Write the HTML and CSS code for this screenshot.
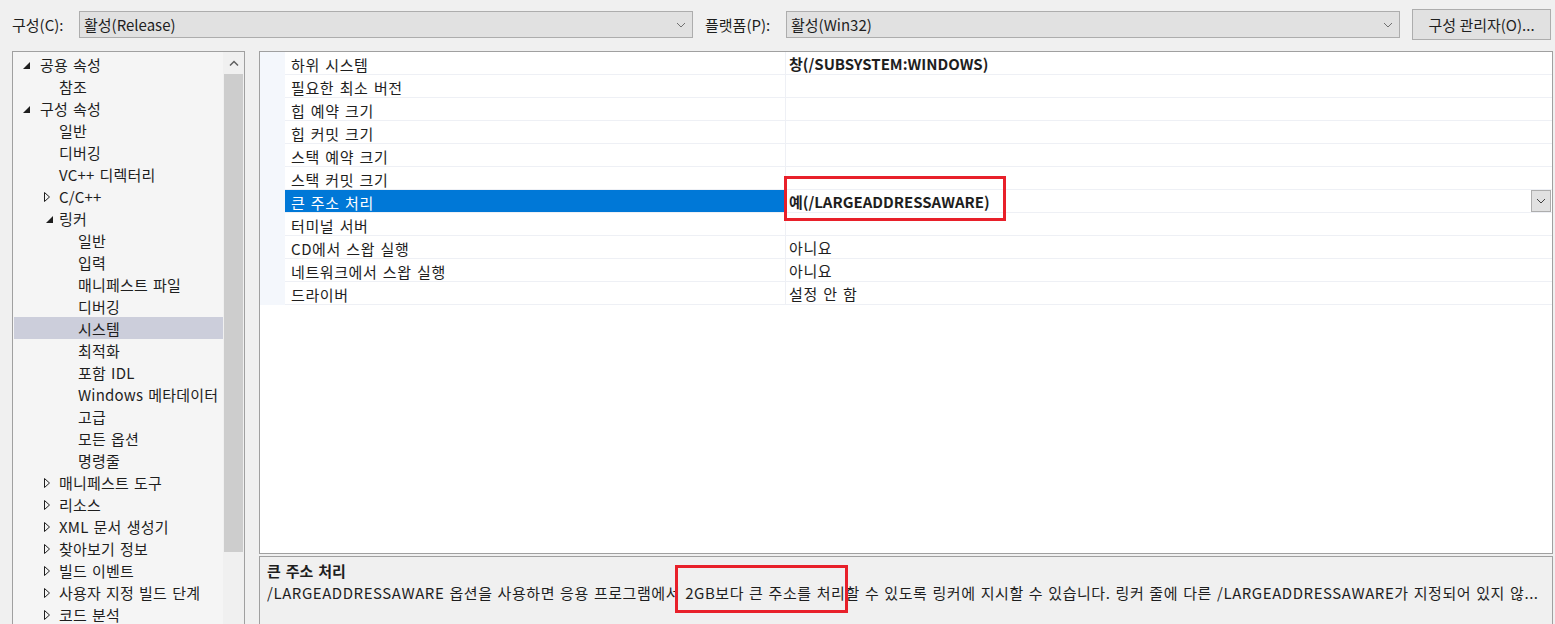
FILE: index.html
```html
<!DOCTYPE html>
<html>
<head>
    <title>속성 페이지</title>
    <meta charset="UTF-8">
    <link rel="stylesheet" href="styles.css">
</head>
<body>
    <div class="toolbar">
        <span class="bar-label">구성(C):</span>
        <div class="combo">
            <span>활성(Release)</span>
            <svg class="chevron" width="10" height="6" viewBox="0 0 10 6"><path d="M1 1 L5 5 L9 1" fill="none" stroke="#707070" stroke-width="1"/></svg>
        </div>
        <span class="bar-label label-platform">플랫폼(P):</span>
        <div class="combo">
            <span>활성(Win32)</span>
            <svg class="chevron" width="10" height="6" viewBox="0 0 10 6"><path d="M1 1 L5 5 L9 1" fill="none" stroke="#707070" stroke-width="1"/></svg>
        </div>
        <button class="manager-button">구성 관리자(O)...</button>
    </div>

    <div class="main">
        <div class="tree">
            <div class="tree-list">
                <div class="tree-row lvl-0"><span class="exp"><svg width="7" height="7" viewBox="0 0 7 7"><path d="M7 0 L7 7 L0 7 Z" fill="#1e1e1e"/></svg></span>공용 속성</div>
                <div class="tree-row lvl-1"><span class="exp"></span>참조</div>
                <div class="tree-row lvl-0"><span class="exp"><svg width="7" height="7" viewBox="0 0 7 7"><path d="M7 0 L7 7 L0 7 Z" fill="#1e1e1e"/></svg></span>구성 속성</div>
                <div class="tree-row lvl-1"><span class="exp"></span>일반</div>
                <div class="tree-row lvl-1"><span class="exp"></span>디버깅</div>
                <div class="tree-row lvl-1"><span class="exp"></span>VC++ 디렉터리</div>
                <div class="tree-row lvl-1"><span class="exp closed"><svg width="6" height="10" viewBox="0 0 6 10"><path d="M0.5 0.5 L5.5 5 L0.5 9.5 Z" fill="none" stroke="#1e1e1e" stroke-width="1"/></svg></span>C/C++</div>
                <div class="tree-row lvl-1"><span class="exp open-sub"><svg width="7" height="7" viewBox="0 0 7 7"><path d="M7 0 L7 7 L0 7 Z" fill="#1e1e1e"/></svg></span>링커</div>
                <div class="tree-row lvl-2"><span class="exp"></span>일반</div>
                <div class="tree-row lvl-2"><span class="exp"></span>입력</div>
                <div class="tree-row lvl-2"><span class="exp"></span>매니페스트 파일</div>
                <div class="tree-row lvl-2"><span class="exp"></span>디버깅</div>
                <div class="tree-row lvl-2 selected"><span class="exp"></span>시스템</div>
                <div class="tree-row lvl-2"><span class="exp"></span>최적화</div>
                <div class="tree-row lvl-2"><span class="exp"></span>포함 IDL</div>
                <div class="tree-row lvl-2"><span class="exp"></span>Windows 메타데이터</div>
                <div class="tree-row lvl-2"><span class="exp"></span>고급</div>
                <div class="tree-row lvl-2"><span class="exp"></span>모든 옵션</div>
                <div class="tree-row lvl-2"><span class="exp"></span>명령줄</div>
                <div class="tree-row lvl-1"><span class="exp closed"><svg width="6" height="10" viewBox="0 0 6 10"><path d="M0.5 0.5 L5.5 5 L0.5 9.5 Z" fill="none" stroke="#1e1e1e" stroke-width="1"/></svg></span>매니페스트 도구</div>
                <div class="tree-row lvl-1"><span class="exp closed"><svg width="6" height="10" viewBox="0 0 6 10"><path d="M0.5 0.5 L5.5 5 L0.5 9.5 Z" fill="none" stroke="#1e1e1e" stroke-width="1"/></svg></span>리소스</div>
                <div class="tree-row lvl-1"><span class="exp closed"><svg width="6" height="10" viewBox="0 0 6 10"><path d="M0.5 0.5 L5.5 5 L0.5 9.5 Z" fill="none" stroke="#1e1e1e" stroke-width="1"/></svg></span>XML 문서 생성기</div>
                <div class="tree-row lvl-1"><span class="exp closed"><svg width="6" height="10" viewBox="0 0 6 10"><path d="M0.5 0.5 L5.5 5 L0.5 9.5 Z" fill="none" stroke="#1e1e1e" stroke-width="1"/></svg></span>찾아보기 정보</div>
                <div class="tree-row lvl-1"><span class="exp closed"><svg width="6" height="10" viewBox="0 0 6 10"><path d="M0.5 0.5 L5.5 5 L0.5 9.5 Z" fill="none" stroke="#1e1e1e" stroke-width="1"/></svg></span>빌드 이벤트</div>
                <div class="tree-row lvl-1"><span class="exp closed"><svg width="6" height="10" viewBox="0 0 6 10"><path d="M0.5 0.5 L5.5 5 L0.5 9.5 Z" fill="none" stroke="#1e1e1e" stroke-width="1"/></svg></span>사용자 지정 빌드 단계</div>
                <div class="tree-row lvl-1"><span class="exp closed"><svg width="6" height="10" viewBox="0 0 6 10"><path d="M0.5 0.5 L5.5 5 L0.5 9.5 Z" fill="none" stroke="#1e1e1e" stroke-width="1"/></svg></span>코드 분석</div>
            </div>
            <div class="scrollbar">
                <div class="scroll-btn"><svg width="10" height="6" viewBox="0 0 10 6"><path d="M1 5.5 L5 1.5 L9 5.5" fill="none" stroke="#606060" stroke-width="1.5"/></svg></div>
                <div class="scroll-thumb"></div>
                <div class="scroll-track"></div>
                <div class="scroll-btn"><svg width="10" height="6" viewBox="0 0 10 6"><path d="M1 0.5 L5 4.5 L9 0.5" fill="none" stroke="#606060" stroke-width="1.5"/></svg></div>
            </div>
        </div>

        <div class="right">
            <div class="grid">
                <div class="prop-row"><div class="margin"></div><div class="name">하위 시스템</div><div class="value bold">창(/SUBSYSTEM:WINDOWS)</div></div>
                <div class="prop-row"><div class="margin"></div><div class="name">필요한 최소 버전</div><div class="value"></div></div>
                <div class="prop-row"><div class="margin"></div><div class="name">힙 예약 크기</div><div class="value"></div></div>
                <div class="prop-row"><div class="margin"></div><div class="name">힙 커밋 크기</div><div class="value"></div></div>
                <div class="prop-row"><div class="margin"></div><div class="name">스택 예약 크기</div><div class="value"></div></div>
                <div class="prop-row"><div class="margin"></div><div class="name">스택 커밋 크기</div><div class="value"></div></div>
                <div class="prop-row active"><div class="margin"></div><div class="name">큰 주소 처리</div><div class="value bold"><span class="mark mark-value">예(/LARGEADDRESSAWARE)</span>
                    <span class="drop-btn"><svg width="10" height="6" viewBox="0 0 10 6"><path d="M1 1 L5 5 L9 1" fill="none" stroke="#404040" stroke-width="1"/></svg></span></div></div>
                <div class="prop-row"><div class="margin"></div><div class="name">터미널 서버</div><div class="value"></div></div>
                <div class="prop-row"><div class="margin"></div><div class="name">CD에서 스왑 실행</div><div class="value">아니요</div></div>
                <div class="prop-row"><div class="margin"></div><div class="name">네트워크에서 스왑 실행</div><div class="value">아니요</div></div>
                <div class="prop-row"><div class="margin"></div><div class="name">드라이버</div><div class="value">설정 안 함</div></div>
            </div>
            <div class="desc">
                <div class="desc-title">큰 주소 처리</div>
                <div class="desc-text">/LARGEADDRESSAWARE 옵션을 사용하면 응용 프로그램에서 <span class="mark mark-desc">2GB보다 큰 주소를 처리</span>할 수 있도록 링커에 지시할 수 있습니다. 링커 줄에 다른 /LARGEADDRESSAWARE가 지정되어 있지 않...</div>
            </div>
        </div>
    </div>
</body>
</html>
```

FILE: styles.css
```css
:root {
    --window-bg: #f0f0f0;
    --panel-border: #a0a0a0;
    --control-bg: #e1e1e1;
    --control-border: #adadad;
    --text-color: #1e1e1e;
    --select-blue: #0078d7;
    --tree-select: #cccedb;
    --row-line: #eef0f5;
    --margin-col: #f4f7fc;
    --mark-red: #e8202a;
}

html, body {
    margin: 0;
    padding: 0;
    height: 624px;
    overflow: hidden;
}

body {
    font-family: "Noto Sans CJK KR", "Noto Sans", sans-serif;
    font-size: 15px;
    color: var(--text-color);
    background-color: var(--window-bg);
    letter-spacing: 0.6px;
    word-spacing: 1.5px;
}

/* top bar */
.toolbar {
    display: flex;
    align-items: center;
    height: 31px;
    padding: 9px 4px 0 12px;
}

.bar-label {
    white-space: nowrap;
    width: 67px;
    flex-shrink: 0;
    letter-spacing: 0;
}

.label-platform {
    margin-left: 12px;
    width: 81px;
}

.combo {
    display: flex;
    align-items: center;
    justify-content: space-between;
    width: 602px;
    height: 25px;
    padding: 0 6px 0 4px;
    background-color: var(--control-bg);
    border: 1px solid var(--control-border);
    letter-spacing: 0;
    flex-shrink: 0;
}

.chevron {
    flex-shrink: 0;
}

.manager-button {
    margin-left: 12px;
    height: 31px;
    width: 139px;
    font-family: inherit;
    font-size: 15px;
    letter-spacing: 0;
    color: var(--text-color);
    background-color: var(--control-bg);
    border: 1px solid var(--control-border);
    padding: 0;
    flex-shrink: 0;
}

/* main area */
.main {
    display: flex;
    align-items: flex-start;
    padding: 11px 0 0 12px;
}

.tree {
    display: flex;
    width: 231px;
    height: 600px;
    background-color: #f5f5f5;
    border: 1px solid var(--panel-border);
    flex-shrink: 0;
}

.tree-list {
    flex: 1;
    padding: 1px 0 0 1px;
    min-width: 0;
    overflow: hidden;
}

.tree-row {
    display: flex;
    align-items: center;
    box-sizing: border-box;
    height: 22px;
    padding-top: 2px;
    line-height: 20px;
    white-space: nowrap;
    letter-spacing: 0.2px;
}

.tree-row.lvl-0 { padding-left: 8px; }
.tree-row.lvl-1 { padding-left: 27px; }
.tree-row.lvl-2 { padding-left: 46px; }

.tree-row.selected {
    background-color: var(--tree-select);
}

.exp {
    width: 18px;
    flex-shrink: 0;
    display: flex;
    align-items: center;
}

.exp svg {
    margin-left: 1px;
}

.exp.closed svg {
    margin-left: 3px;
}

.exp.open-sub svg {
    margin-left: 5px;
}

.scrollbar {
    width: 21px;
    display: flex;
    flex-direction: column;
    background-color: var(--window-bg);
    flex-shrink: 0;
}

.scroll-btn {
    height: 22px;
    display: flex;
    align-items: center;
    justify-content: center;
    flex-shrink: 0;
}

.scroll-thumb {
    height: 478px;
    margin: 0 1px;
    background-color: #cdcdcd;
}

.scroll-track {
    flex: 1;
}

.right {
    display: flex;
    flex-direction: column;
    margin-left: 14px;
    width: 1294px;
}

/* property grid */
.grid {
    height: 501px;
    background-color: #ffffff;
    border: 1px solid var(--panel-border);
}

.prop-row {
    display: flex;
    height: 23px;
}

.prop-row .margin {
    width: 25px;
    flex-shrink: 0;
    background-color: var(--margin-col);
}

.prop-row .name {
    box-sizing: border-box;
    width: 501px;
    height: 23px;
    padding: 3px 0 0 6px;
    line-height: 19px;
    border-bottom: 1px solid var(--row-line);
    border-right: 1px solid var(--row-line);
    white-space: nowrap;
    flex-shrink: 0;
}

.prop-row .value {
    flex: 1;
    display: flex;
    align-items: center;
    justify-content: space-between;
    box-sizing: border-box;
    height: 23px;
    padding: 2px 0 1px 3px;
    line-height: 19px;
    border-bottom: 1px solid var(--row-line);
    white-space: nowrap;
}

.value.bold {
    font-weight: bold;
    letter-spacing: 0;
}

.prop-row.active .name {
    background-color: var(--select-blue);
    color: #ffffff;
}

.drop-btn {
    width: 18px;
    height: 20px;
    margin: -2px 1px 0 0;
    display: flex;
    align-items: center;
    justify-content: center;
    background-color: var(--control-bg);
    border: 1px solid var(--control-border);
}

/* red callouts */
.mark {
    position: relative;
}

.mark::after {
    content: "";
    position: absolute;
    border: 3px solid var(--mark-red);
}

.mark-value::after {
    top: -16px;
    bottom: -10px;
    left: -5px;
    right: -16px;
}

.mark-desc::after {
    top: -17px;
    bottom: -10px;
    left: -10px;
    right: -3px;
}

/* description panel */
.desc {
    margin-top: 2px;
    height: 80px;
    padding: 3px 4px 0 7px;
    border: 1px solid var(--panel-border);
    background-color: var(--window-bg);
}

.desc-title {
    font-weight: bold;
    line-height: 22px;
    letter-spacing: 0;
}

.desc-text {
    line-height: 22px;
    padding: 20px 0 14px;
    margin: -20px 0 -14px;
    white-space: nowrap;
    overflow: hidden;
    letter-spacing: 0.55px;
    word-spacing: 1.2px;
}
```
